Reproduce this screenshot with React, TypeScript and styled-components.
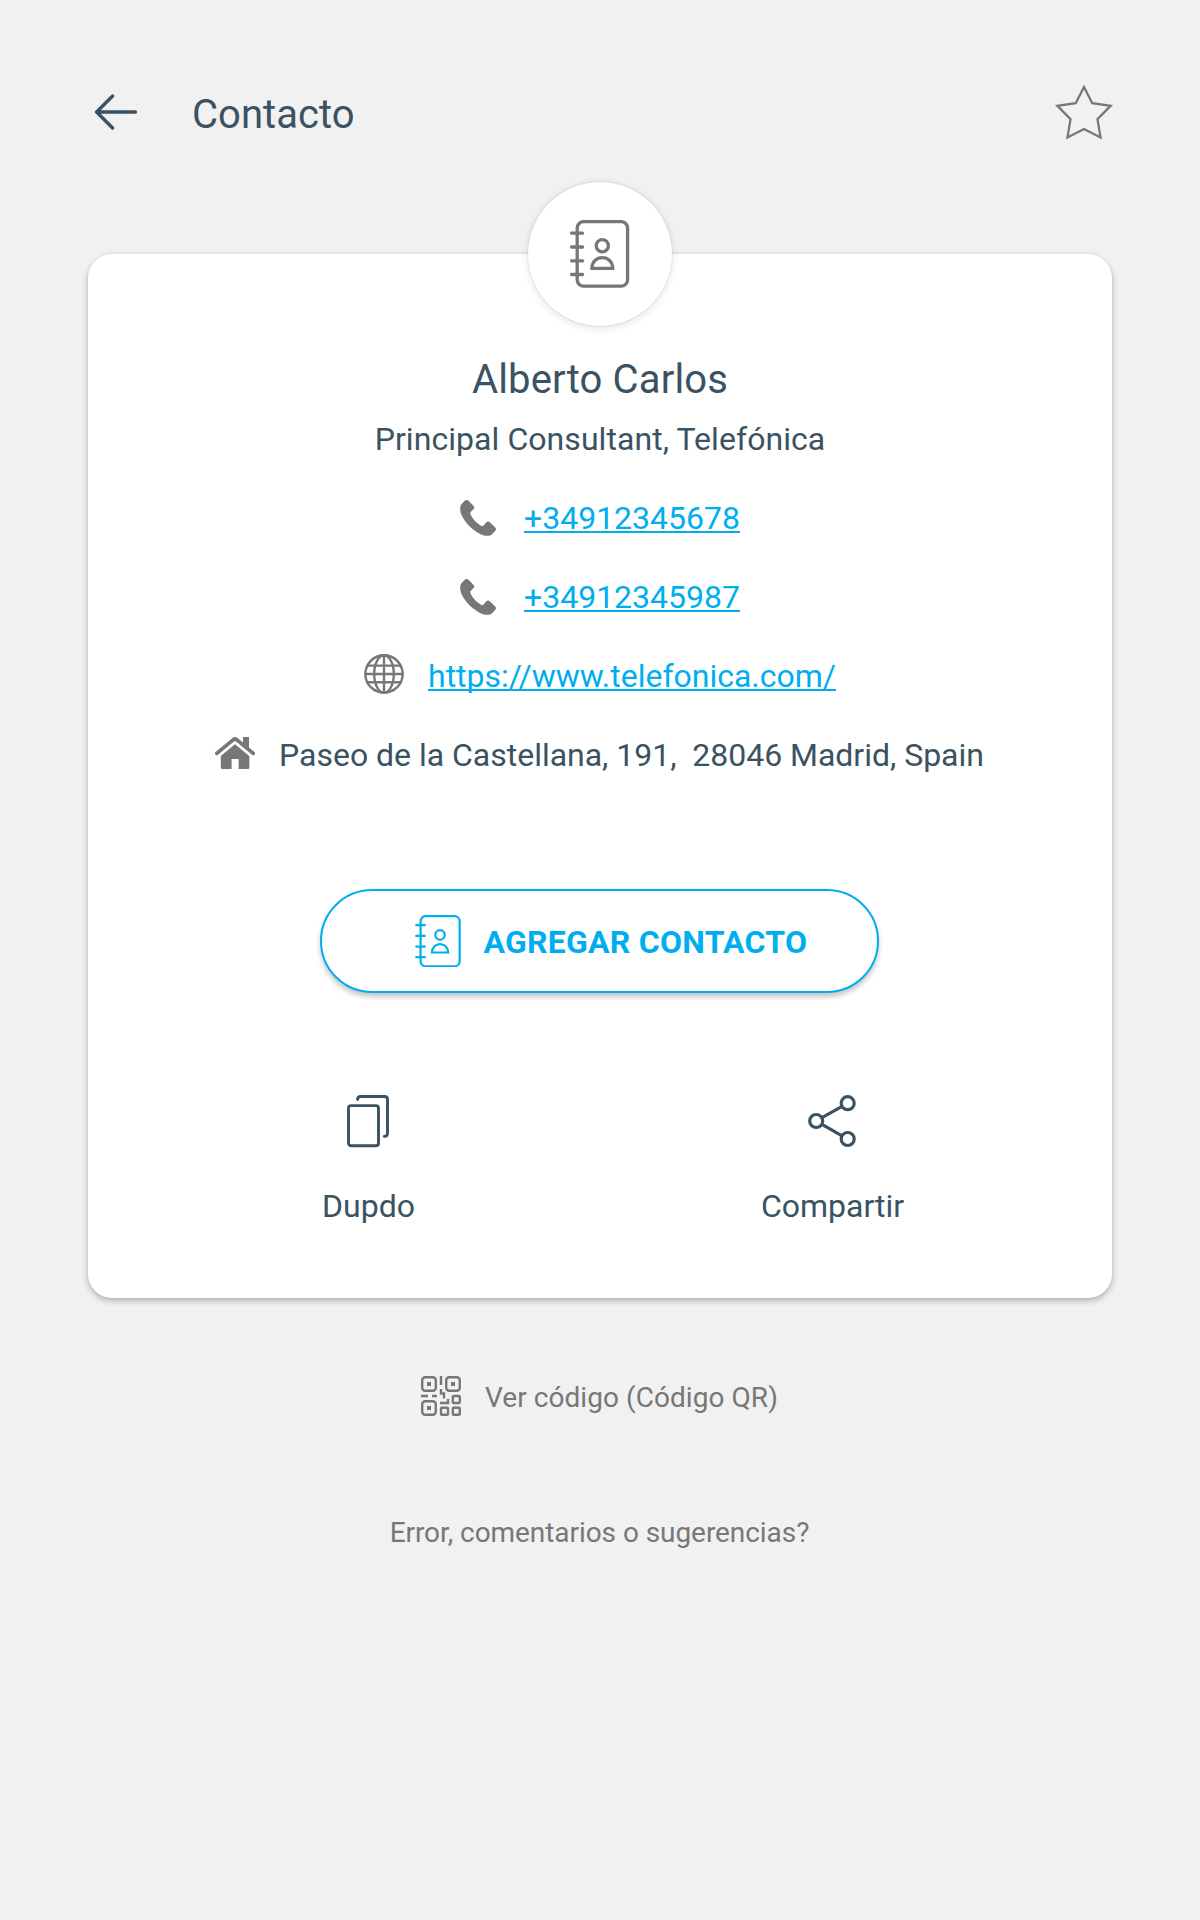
import React from "react";
import styled, { createGlobalStyle } from "styled-components";

const ink = "#3a5261";
const grey = "#777777";
const blue = "#00aeef";
const canvas = "#f1f1f1";

const GlobalStyle = createGlobalStyle`
  *, *::before, *::after { box-sizing: border-box; }
  body {
    margin: 0;
    background: ${canvas};
    font-family: Roboto, "Liberation Sans", sans-serif;
    color: ${ink};
  }
  svg { display: block; flex: none; }
`;

const Page = styled.div`
  display: flex;
  flex-direction: column;
  align-items: center;
  width: 1200px;
  height: 1920px;
  background: ${canvas};
`;

const Header = styled.header`
  display: flex;
  align-items: flex-start;
  width: 100%;
  height: 182px;
  padding: 83px 86px 0 94px;
`;

const BackButton = styled.button`
  margin: 10px 0 0;
  padding: 0;
  border: 0;
  background: none;
`;

const Title = styled.h1`
  flex: 1;
  margin: 8px 0 0 53px;
  font-size: 40px;
  font-weight: 400;
  line-height: 47px;
  letter-spacing: 0.06px;
`;

const StarButton = styled.button`
  margin: 0;
  padding: 0;
  border: 0;
  background: none;
`;

const Card = styled.main`
  display: flex;
  flex-direction: column;
  align-items: center;
  width: 1024px;
  height: 1044px;
  margin-top: 72px;
  padding: 0 48px;
  border-radius: 24px;
  background: #fff;
  box-shadow: 0 3px 6px rgba(0, 0, 0, 0.26), 0 0 3px rgba(0, 0, 0, 0.06);
`;

const Avatar = styled.div`
  display: flex;
  align-items: center;
  justify-content: center;
  width: 144px;
  height: 144px;
  margin-top: -72px;
  border-radius: 50%;
  background: #fff;
  box-shadow: 0 2px 8px rgba(0, 0, 0, 0.12), 0 0 2px rgba(0, 0, 0, 0.15);
`;

const Name = styled.h2`
  margin: 30px 0 0;
  font-size: 40px;
  font-weight: 400;
  line-height: 47px;
  letter-spacing: 0.15px;
`;

const Role = styled.p`
  margin: 17px 0 0;
  font-size: 32px;
  line-height: 38px;
  letter-spacing: 0.06px;
`;

const Details = styled.ul`
  display: flex;
  flex-direction: column;
  align-items: center;
  gap: 39px;
  margin: 38px 0 0;
  padding: 0;
  list-style: none;
`;

const Detail = styled.li`
  display: flex;
  gap: 24px;
  height: 40px;
  font-size: 32px;
  line-height: 38px;
  white-space: pre;
`;

const Value = styled.span`
  margin: 3px 1px 0 0;
  letter-spacing: -0.02px;
`;

const Link = styled.a`
  margin-top: 3px;
  color: ${blue};
  letter-spacing: -0.01px;
  text-decoration: underline;
  text-decoration-thickness: 2px;
  text-underline-offset: 2px;
  text-decoration-skip-ink: none;
`;

const AddButton = styled.button`
  display: flex;
  align-items: center;
  width: 559px;
  height: 104px;
  margin: 116px 1px 0 0;
  padding: 0 0 0 93px;
  gap: 22px;
  border: 2px solid ${blue};
  border-radius: 52px;
  background: #fff;
  box-shadow: 0 4px 5px rgba(0, 0, 0, 0.22);
  color: ${blue};
  font: 700 32px/38px Roboto, "Liberation Sans", sans-serif;
  letter-spacing: 0.25px;
  white-space: nowrap;
`;

const AddLabel = styled.span`
  padding-top: 1px;
`;

const Actions = styled.div`
  display: grid;
  grid-template-columns: 1fr 1fr;
  align-self: stretch;
  margin-top: 102px;
`;

const Action = styled.div`
  display: flex;
  flex-direction: column;
  align-items: center;
  gap: 39px;
  font-size: 32px;
  line-height: 38px;
`;

const ActionLabel = styled.span`
  padding-left: 1px;
`;

const QrRow = styled.div`
  display: flex;
  gap: 24px;
  margin: 78px 1px 0 0;
  color: ${grey};
  font-size: 28px;
  line-height: 33px;
`;

const QrLabel = styled.span`
  margin-top: 5px;
  letter-spacing: 0.06px;
`;

const Feedback = styled.p`
  margin: 100px 1px 0 0;
  color: ${grey};
  font-size: 28px;
  line-height: 33px;
  letter-spacing: -0.06px;
`;

const ArrowIcon = () => (
  <svg width="45" height="38" viewBox="0 0 45 38" fill="none" stroke={ink} strokeWidth="3.4" strokeLinecap="round" strokeLinejoin="round">
    <path d="M41.4 19H2.6M18.6 3L2.6 19L18.6 35" />
  </svg>
);

const StarIcon = () => (
  <svg width="60" height="58" viewBox="0 0 60 58" fill="none" stroke={grey} strokeWidth="2.3">
    <path d="M30 4L38.3 20.2L56.6 22.9L43.5 36.1L46.5 54.4L30 46L13.5 54.4L16.5 36.1L3.4 22.9L21.7 20.2Z" />
  </svg>
);

const BookIcon = ({ width, height, color, stroke }: { width: number; height: number; color: string; stroke: number }) => (
  <svg width={width} height={height} viewBox="0 0 60 68" fill="none" stroke={color} strokeWidth={stroke} strokeLinecap="round">
    <rect x="7.2" y="1.6" width="50.4" height="64.6" rx="6.5" />
    <path d="M1.6 13.2H12.6M1.6 27H12.6M1.6 40.8H12.6M1.6 54.5H12.6" />
    <circle cx="32.3" cy="25.7" r="6.1" />
    <path d="M21.9 48.4C21.9 41.9 26.4 37.7 32.3 37.7S42.7 41.9 42.7 48.4Z" />
  </svg>
);

const PhoneIcon = () => (
  <svg width="40" height="40" viewBox="0 0 40 40" fill={grey}>
    <path d="M5 4.6Q6.6 3.3 8.3 4.6L13.4 9.8Q15 11.4 13.8 12.8L10.2 16.6C10.2 21 18.9 30.2 22.8 30.2L26.6 26.1Q28.2 24.9 29.8 26.2L35.2 31.6Q36.8 33.4 35.2 35L32 38.2C29.8 40.6 25 40.2 20.6 38.2C12.4 34.2 5.2 27 1.4 18.8C-.2 15 -.3 10.2 1.4 8.2Z" />
  </svg>
);

const GlobeIcon = () => (
  <svg width="40" height="40" viewBox="0 0 40 40" fill="none" stroke={grey} strokeWidth="2.4">
    <circle cx="20" cy="20" r="18.7" />
    <ellipse cx="20" cy="20" rx="9.8" ry="18.7" />
    <path d="M20 1V39M1 20H39M4 11.6H36M4 28.2H36" />
  </svg>
);

const HomeIcon = () => (
  <svg width="40" height="40" viewBox="0 0 40 40">
    <path d="M5.8 21.4L20 9.8L34.4 21.4V34.4Q34.4 36 32.8 36H23.6V26H16.6V36H7.4Q5.8 36 5.8 34.4Z" fill={grey} />
    <path d="M2.2 21.8L20 7L37.8 21.8" fill="none" stroke="#fff" strokeWidth="6.4" />
    <path d="M28 4H34V16.2L28 11.2Z" fill={grey} />
    <path d="M1.8 20.4L18.4 6.6Q20 5.4 21.6 6.6L38.2 20.4" fill="none" stroke={grey} strokeWidth="3.8" strokeLinecap="round" strokeLinejoin="round" />
  </svg>
);

const CopyIcon = () => (
  <svg width="42" height="53" viewBox="0 0 42 53" fill="none" stroke={ink} strokeWidth="2.9" strokeLinecap="round">
    <rect x="1.5" y="10.6" width="30" height="40.2" rx="2.6" />
    <path d="M10.6 4.6Q10.6 1.5 13.6 1.5H37.5Q40.5 1.5 40.5 4.5V38.2Q40.5 41.4 37.3 41.4" />
  </svg>
);

const ShareIcon = () => (
  <svg width="48" height="53" viewBox="0 0 48 53" fill="none" stroke={ink} strokeWidth="3.2">
    <circle cx="8.2" cy="26" r="6.5" />
    <circle cx="39.7" cy="8.2" r="6.5" />
    <circle cx="39.7" cy="44" r="6.5" />
    <path d="M14 22.7L34 11.4M14 29.3L34 40.8" />
  </svg>
);

const QrIcon = () => (
  <svg width="40" height="40" viewBox="0 0 40 40" fill="none" stroke={grey} strokeWidth="2.4">
    <rect x="1.2" y="1.2" width="13.6" height="13.6" rx="3" />
    <rect x="25.2" y="1.2" width="13.6" height="13.6" rx="3" />
    <rect x="1.2" y="25.2" width="13.6" height="13.6" rx="3" />
    <path d="M6 8H10M30 8H34M6 32H10" strokeWidth="4" />
    <rect x="31.8" y="20" width="7" height="7" rx="1" />
    <rect x="20" y="31.8" width="7" height="7" rx="1" />
    <rect x="31.8" y="31.8" width="7" height="7" rx="1" />
    <path d="M0 20H7M11 20H16M20 0V9M20 13V17.5H23V22.5M19 27H27V23" />
  </svg>
);

export default function App() {
  return (
    <Page>
      <GlobalStyle />
      <Header>
        <BackButton aria-label="Volver"><ArrowIcon /></BackButton>
        <Title>Contacto</Title>
        <StarButton aria-label="Favorito"><StarIcon /></StarButton>
      </Header>
      <Card>
        <Avatar><BookIcon width={60} height={68} color={grey} stroke={3.3} /></Avatar>
        <Name>Alberto Carlos</Name>
        <Role>Principal Consultant, Telefónica</Role>
        <Details>
          <Detail><PhoneIcon /><Link>+34912345678</Link></Detail>
          <Detail><PhoneIcon /><Link>+34912345987</Link></Detail>
          <Detail><GlobeIcon /><Link>https://www.telefonica.com/</Link></Detail>
          <Detail><HomeIcon /><Value>{"Paseo de la Castellana, 191,  28046 Madrid, Spain"}</Value></Detail>
        </Details>
        <AddButton>
          <BookIcon width={46.5} height={52.7} color={blue} stroke={2.9} />
          <AddLabel>AGREGAR CONTACTO</AddLabel>
        </AddButton>
        <Actions>
          <Action><CopyIcon /><ActionLabel>Dupdo</ActionLabel></Action>
          <Action><ShareIcon /><ActionLabel>Compartir</ActionLabel></Action>
        </Actions>
      </Card>
      <QrRow><QrIcon /><QrLabel>Ver código (Código QR)</QrLabel></QrRow>
      <Feedback>Error, comentarios o sugerencias?</Feedback>
    </Page>
  );
}
